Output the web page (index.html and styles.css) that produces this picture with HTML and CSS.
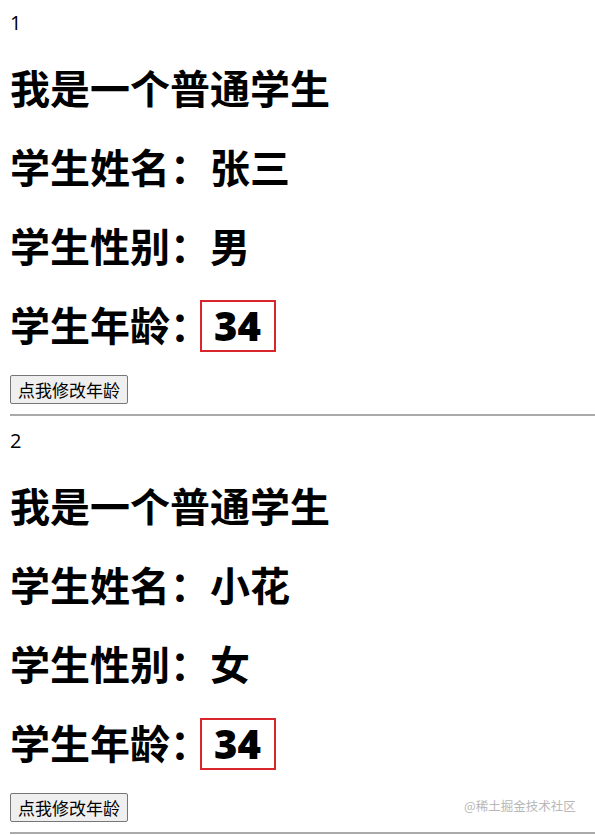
FILE: index.html
```html
<!DOCTYPE html>
<html>

<head>
  <meta charset="utf-8">
  <meta name="viewport" content="width=device-width">
  <title>学生</title>
  <link rel="stylesheet" href="styles.css">
</head>

<body>
  <div id="app">
    <!-- first student -->
    <div class="student">
      <div class="index">1</div>
      <h1>我是一个普通学生</h1>
      <h1>学生姓名：张三</h1>
      <h1>学生性别：男</h1>
      <h1>学生年龄：<span class="age">34</span></h1>
      <button class="btn" type="button">点我修改年龄</button>
      <hr>
    </div>

    <!-- second student -->
    <div class="student">
      <div class="index">2</div>
      <h1>我是一个普通学生</h1>
      <h1>学生姓名：小花</h1>
      <h1>学生性别：女</h1>
      <h1>学生年龄：<span class="age">34</span></h1>
      <button class="btn" type="button">点我修改年龄</button>
      <hr>
    </div>
  </div>

  <div class="watermark">@稀土掘金技术社区</div>
</body>

</html>
```

FILE: styles.css
```css
body {
  margin: 10px 0 0 10px;
  font-family: "Open Sans", "Noto Sans CJK SC", sans-serif;
  font-size: 20px;
  line-height: 1.3;
  color: #000;
  background: #fff;
}

.index {
  height: 26px;
}

h1 {
  font-size: 40px;
  font-weight: 700;
  line-height: 52px;
  margin: 27px 0;
}

/* age box */
.age {
  display: inline-block;
  height: 48px;
  line-height: 48px;
  margin-left: -10px;
  padding: 0 13px 0 12px;
  border: 2px solid #d8262c;
  vertical-align: top;
  font-weight: 800;
}

.btn {
  display: block;
  margin-top: -4px;
  height: 29px;
  padding: 0 7px;
  font-family: "Noto Sans CJK SC", sans-serif;
  font-size: 17px;
  line-height: 27px;
  color: #000;
  background: #efefef;
  border: 1px solid #767676;
  border-radius: 2px;
}

hr {
  margin: 10px 0 12px;
  border: none;
  border-top: 2px solid #aaa;
}

.watermark {
  position: absolute;
  top: 798px;
  left: 464px;
  font-family: "Noto Sans CJK SC", sans-serif;
  font-size: 12.5px;
  color: #b8b8b8;
}
```
